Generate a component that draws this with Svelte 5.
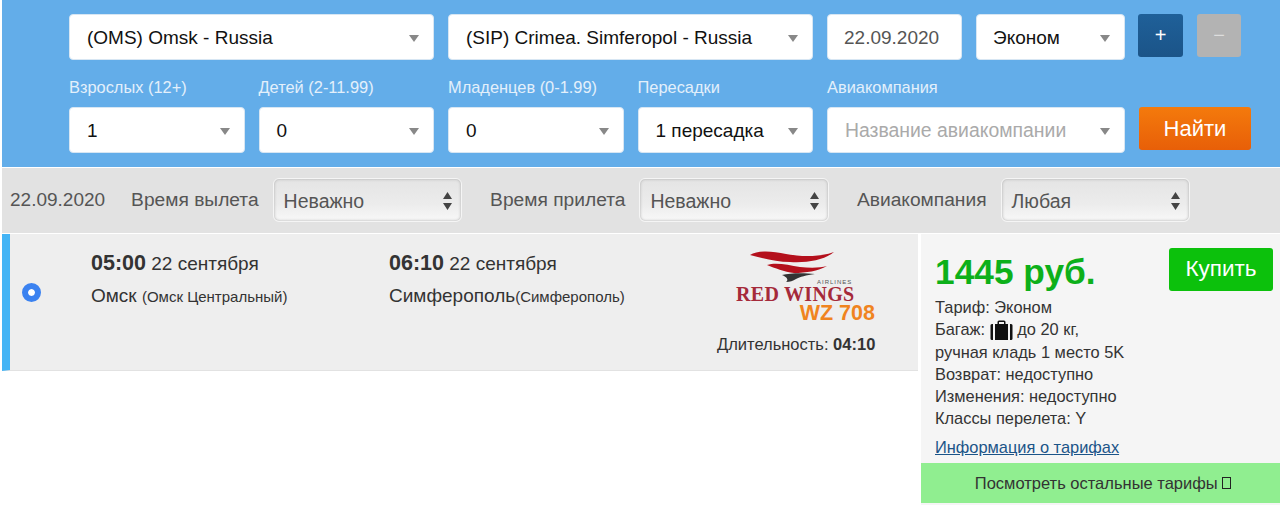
<script>
  const counts = [
    { label: "Взрослых (12+)", value: "1" },
    { label: "Детей (2-11.99)", value: "0" },
    { label: "Младенцев (0-1.99)", value: "0" },
    { label: "Пересадки", value: "1 пересадка" }
  ];
  const filters = [
    { label: "Время вылета", value: "Неважно" },
    { label: "Время прилета", value: "Неважно" },
    { label: "Авиакомпания", value: "Любая" }
  ];
  const tariff = ["Возврат: недоступно", "Изменения: недоступно", "Классы перелета: Y"];
</script>

<div class="page">
  <form class="search">
    <div class="row">
      <div class="field route">(OMS) Omsk - Russia</div>
      <div class="field route">(SIP) Crimea. Simferopol - Russia</div>
      <div class="field date">22.09.2020</div>
      <div class="field cabin">Эконом</div>
      <button type="button" class="square plus">+</button>
      <button type="button" class="square minus">−</button>
    </div>
    <div class="row lower">
      {#each counts as c}
        <label class="count">
          <span>{c.label}</span>
          <div class="field">{c.value}</div>
        </label>
      {/each}
      <label class="airline">
        <span>Авиакомпания</span>
        <div class="field placeholder">Название авиакомпании</div>
      </label>
      <button type="button" class="find">Найти</button>
    </div>
  </form>

  <div class="filters">
    <span class="day">22.09.2020</span>
    {#each filters as f}
      <span class="filter-label">{f.label}</span>
      <div class="stepper">
        {f.value}
        <svg width="9" height="20" viewBox="0 0 9 20"><path d="M4.5 1 9 8H0zM4.5 19 0 12h9z" fill="#444" /></svg>
      </div>
    {/each}
  </div>

  <div class="results">
    <div class="flight">
      <span class="radio"></span>
      <div class="leg from">
        <div><b>05:00</b> 22 сентября</div>
        <div class="city">Омск <small>(Омск Центральный)</small></div>
      </div>
      <div class="leg to">
        <div><b>06:10</b> 22 сентября</div>
        <div class="city">Симферополь<small>(Симферополь)</small></div>
      </div>
      <div class="carrier">
        <div class="logo">
          <svg width="90" height="38" viewBox="0 0 90 38">
            <path d="M2 7C10 2 24 3 38 6 54 9 72 9 86 4 76 12 60 15 42 14 28 14 14 10 2 7Z" fill="#b4101c" />
            <path d="M19 17C28 14 40 17 52 19 62 20 72 20 79 18 70 23 58 25 46 25 36 24 27 20 19 17Z" fill="#b4101c" />
            <path d="M34 27C42 25 56 25 67 26 58 27 52 29 48 31 45 33 42 34 38 34 41 32 39 29 34 27Z" fill="#333" />
          </svg>
          <span class="airlines">AIRLINES</span>
          <span class="wordmark">RED WINGS</span>
        </div>
        <div class="flight-no">WZ 708</div>
        <div class="duration">Длительность: <b>04:10</b></div>
      </div>
    </div>

    <aside class="offer">
      <div class="offer-body">
        <div class="offer-top">
          <div class="price">1445 руб.</div>
          <button type="button" class="buy">Купить</button>
        </div>
        <div class="terms">
          <div>Тариф: Эконом</div>
          <div class="bag">Багаж:
            <svg width="23" height="20" viewBox="0 0 23 20">
              <path d="M7.500 4V2C7.500 1 8.500 .5 9.500 .5h4c1 0 2 .5 2 1.500V4H14V2H9v2Z" fill="#111" />
              <path d="M.5 5.500C.5 4.500 1 4 3 4v16C1 20 .5 19.500.5 18.500ZM5 4h13v16H5ZM20 4c2 0 2.500.5 2.500 1.500v13c0 1-.5 1.500-2.500 1.500Z" fill="#111" />
            </svg>
            до 20 кг,</div>
          <div>ручная кладь 1 место 5K</div>
          {#each tariff as line}
            <div>{line}</div>
          {/each}
        </div>
        <a href="#tariffs" class="info">Информация о тарифах</a>
      </div>
      <div class="more">Посмотреть остальные тарифы <i class="tofu"></i></div>
    </aside>
  </div>
</div>

<style>
  :global(body) {
    background: #fff;
    font-family: "Liberation Sans", Arial, sans-serif;
  }
  .page {
    width: 1280px;
    height: 505px;
    overflow: hidden;
    padding-left: 2px;
    box-sizing: border-box;
  }
  .search {
    background: #63ade9;
    height: 167px;
    padding: 14px 0 0 67px;
    box-sizing: border-box;
  }
  .row {
    display: flex;
    gap: 14px;
    align-items: flex-start;
  }
  .lower {
    margin-top: 18px;
    align-items: flex-end;
  }
  .field {
    position: relative;
    height: 46px;
    line-height: 45px;
    padding-left: 17px;
    box-sizing: border-box;
    background: #fff;
    border-radius: 4px;
    border: 1px solid #d7e6f3;
    font-size: 19px;
    color: #111;
    white-space: nowrap;
  }
  .field::after {
    content: "";
    position: absolute;
    right: 14px;
    top: 20px;
    border: 5.5px solid transparent;
    border-top: 7px solid #888;
    border-bottom: 0;
  }
  .route {
    width: 365px;
  }
  .date {
    width: 135px;
    color: #555;
    padding-left: 16px;
  }
  .date::after {
    display: none;
  }
  .cabin {
    width: 149px;
    padding-left: 16px;
  }
  .square {
    width: 45px;
    height: 43px;
    border: 0;
    border-radius: 3px;
    color: #fff;
    font: 20px "Liberation Sans", Arial, sans-serif;
    padding: 0;
  }
  .plus {
    background: linear-gradient(#1f6099, #1b5488);
    margin-left: -1px;
  }
  .minus {
    background: #b3b3b3;
    width: 44px;
    color: #ddd;
  }
  .count,
  .airline {
    display: flex;
    flex-direction: column;
    gap: 11px;
    width: 175.5px;
  }
  .count span,
  .airline span {
    font-size: 16.4px;
    line-height: 18px;
    color: #e3f0fb;
  }
  .airline {
    width: 298px;
  }
  .placeholder {
    color: #aaa;
    font-size: 19.4px;
  }
  .find {
    width: 112px;
    height: 43px;
    margin-bottom: 3px;
    border: 0;
    border-radius: 3px;
    background: linear-gradient(#f47a0c, #e85f08);
    color: #fff;
    font: 22px "Liberation Sans", Arial, sans-serif;
    padding: 0;
  }
  .filters {
    display: flex;
    align-items: center;
    height: 64px;
    padding: 0 0 1px 8px;
    margin-top: 1px;
    background: #e2e2e2;
    font-size: 19.2px;
    color: #555;
  }
  .day {
    margin-right: 26px;
    font-size: 19px;
  }
  .filter-label {
    margin-right: 14px;
  }
  .stepper {
    display: flex;
    justify-content: space-between;
    align-items: center;
    width: 189.5px;
    height: 44px;
    margin-right: 28px;
    padding: 2px 9px 0 10px;
    box-sizing: border-box;
    border: 1px solid #f5f5f5;
    border-radius: 6px;
    background: linear-gradient(#e4e4e4, #ececec 60%, #f8f8f8);
    box-shadow: inset 0 0 3px #aaa;
    font-size: 19.5px;
  }
  .results {
    display: flex;
    margin-top: 1px;
    align-items: flex-start;
  }
  .flight {
    position: relative;
    display: flex;
    width: 916px;
    height: 137px;
    box-sizing: border-box;
    background: #eee;
    border-left: 8px solid #44b4f5;
    border-bottom: 1px solid #e2e2e2;
    color: #333;
    font-size: 19px;
  }
  .radio {
    position: absolute;
    left: 12px;
    top: 49px;
    width: 19px;
    height: 19px;
    box-sizing: border-box;
    border-radius: 50%;
    background: #3b82f0;
    border: 6px solid #3b82f0;
    box-shadow: inset 0 0 0 4px #fff;
  }
  .leg {
    padding-top: 17px;
  }
  .leg b {
    font-size: 21.5px;
  }
  .city {
    margin-top: 9px;
  }
  .city small {
    font-size: 15px;
  }
  .from {
    margin-left: 81px;
    width: 298px;
  }
  .to {
    width: 328px;
  }
  .carrier {
    width: 158px;
    text-align: right;
    font-size: 16.5px;
    padding-top: 14px;
    white-space: nowrap;
  }
  .logo {
    position: relative;
    height: 56px;
    color: #a52a3a;
    text-align: left;
  }
  .logo svg {
    position: absolute;
    left: 31px;
    top: 0;
  }
  .airlines {
    position: absolute;
    left: 100px;
    top: 31px;
    font-size: 6px;
    line-height: 6px;
    letter-spacing: 1px;
    color: #555;
  }
  .wordmark {
    position: absolute;
    left: 19px;
    top: 39px;
    font: 700 20px/15px "Liberation Serif", serif;
    letter-spacing: .3px;
  }
  .flight-no {
    color: #f0841f;
    font-size: 21.5px;
    font-weight: 700;
    line-height: 19px;
    padding-top: 1px;
    margin-top: -1px;
  }
  .duration {
    margin-top: 12px;
  }
  .offer {
    width: 359px;
    margin-left: 3px;
    background: #f5f5f5;
    height: 271px;
    display: flex;
    flex-direction: column;
    color: #333;
  }
  .offer-body {
    flex: 1;
    padding: 14px 7px 0 14px;
  }
  .offer-top {
    display: flex;
    justify-content: space-between;
  }
  .price {
    font-size: 35.3px;
    font-weight: 700;
    color: #0db01a;
    line-height: 48px;
  }
  .buy {
    width: 104px;
    height: 43px;
    border: 0;
    border-radius: 3px;
    background: #0cc10c;
    color: #fff;
    font: 22.5px "Liberation Sans", Arial, sans-serif;
    padding: 0 0 2px;
  }
  .terms {
    font-size: 16.4px;
    line-height: 22px;
  }
  .bag {
    margin-bottom: 1px;
  }
  .bag svg {
    vertical-align: -5px;
  }
  .info {
    display: block;
    margin-top: 9px;
    font-size: 16.4px;
    color: #1b5488;
  }
  .more {
    height: 40px;
    margin-bottom: 2px;
    padding-left: 5px;
    background: #90ee90;
    line-height: 40px;
    text-align: center;
    font-size: 16.5px;
  }
  .tofu {
    display: inline-block;
    width: 7px;
    height: 10px;
    border: 1.500px solid #222;
  }
</style>
